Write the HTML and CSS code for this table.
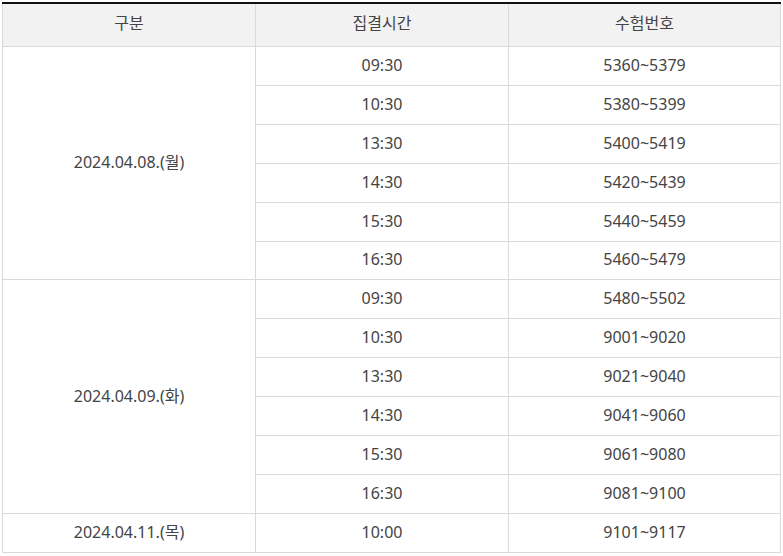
FILE: index.html
```html
<!DOCTYPE html>
<html lang="ko">
<head>
<meta charset="utf-8">
<link rel="stylesheet" href="styles.css">
</head>
<body>
<table class="schedule">
  <colgroup>
    <col class="c1"><col class="c2"><col class="c3">
  </colgroup>
  <thead>
    <tr><th>구분</th><th>집결시간</th><th>수험번호</th></tr>
  </thead>
  <tbody>
    <tr><td rowspan="6">2024.04.08.(월)</td><td>09:30</td><td>5360~5379</td></tr>
    <tr><td>10:30</td><td>5380~5399</td></tr>
    <tr><td>13:30</td><td>5400~5419</td></tr>
    <tr><td>14:30</td><td>5420~5439</td></tr>
    <tr><td>15:30</td><td>5440~5459</td></tr>
    <tr><td>16:30</td><td>5460~5479</td></tr>
    <tr><td rowspan="6">2024.04.09.(화)</td><td>09:30</td><td>5480~5502</td></tr>
    <tr><td>10:30</td><td>9001~9020</td></tr>
    <tr><td>13:30</td><td>9021~9040</td></tr>
    <tr><td>14:30</td><td>9041~9060</td></tr>
    <tr><td>15:30</td><td>9061~9080</td></tr>
    <tr><td>16:30</td><td>9081~9100</td></tr>
    <tr><td>2024.04.11.(목)</td><td>10:00</td><td>9101~9117</td></tr>
  </tbody>
</table>
</body>
</html>
```
FILE: styles.css
```css
html, body {
  margin: 0;
  padding: 0;
  background: #fff;
}
body {
  padding: 2px 3px 0 2px;
  font-family: "Noto Sans", "Noto Sans CJK KR", sans-serif;
  font-size: 16px;
  color: #444;
}
.schedule {
  width: 778px;
  border-collapse: collapse;
  table-layout: fixed;
  border-top: 2px solid #111;
}
.c1 { width: 253px; }
.c2 { width: 253px; }
.c3 { width: 272px; }
.schedule th,
.schedule td {
  border: 1px solid #d9d9d9;
  text-align: center;
  vertical-align: middle;
  padding: 0 0 2px;
  font-weight: normal;
  line-height: 20px;
}
.schedule th {
  background: #f2f2f2;
  height: 38px;
  padding-bottom: 4px;
  border-top: 2px solid #111;
}
.schedule td {
  height: 35.92px;
}
```
